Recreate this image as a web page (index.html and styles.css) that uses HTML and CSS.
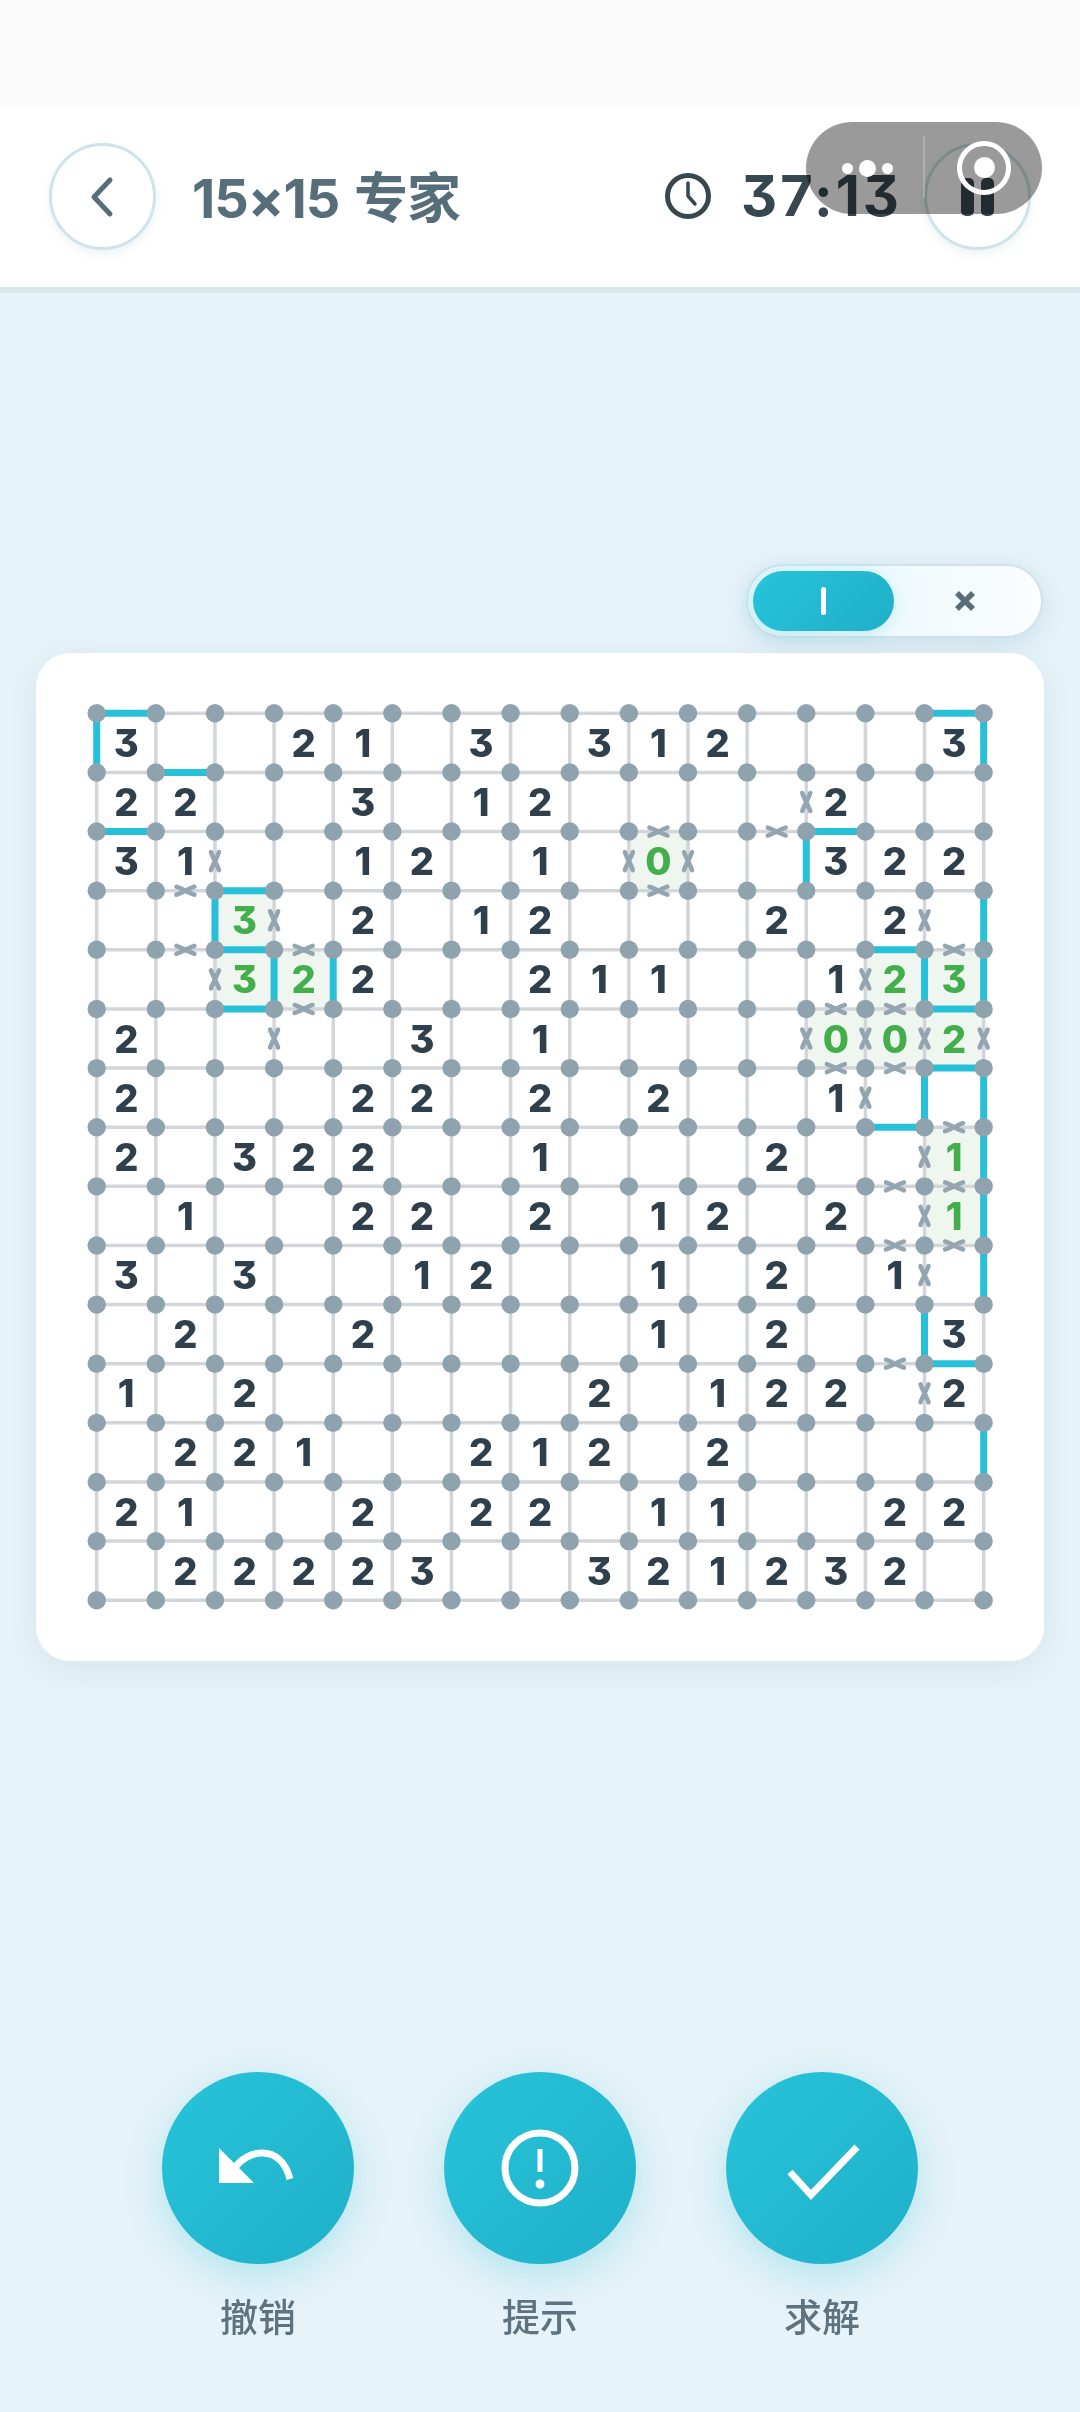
FILE: index.html
```html
<!DOCTYPE html>
<html lang="zh-CN">
<head>
    <meta charset="UTF-8">
    <meta name="viewport" content="width=device-width, initial-scale=1.0">
    <title>数回 - 15×15 专家</title>
    <link rel="stylesheet" href="styles.css">
</head>
<body>

    <div class="statusBar"></div>

    <div class="header">
        <button class="roundButton">
            <svg width="30" height="42" viewBox="0 0 30 42"><path class="chevron" d="M22 4 L6 21 L22 38"/></svg>
        </button>
        <div class="title">15×15 专家</div>
        <div class="timer">
            <svg class="clock" width="48" height="48" viewBox="0 0 48 48">
                <circle cx="24" cy="24" r="20.5"/>
                <path class="clockHand" d="M24 11 V24 L31 32"/>
            </svg>
            <span>37:13</span>
        </div>
        <button class="roundButton pauseButton">
            <span class="pauseBar"></span>
            <span class="pauseBar"></span>
        </button>
    </div>

    <!-- capsule drawn by the host app, sits over the header -->
    <div class="capsule">
        <div class="capsuleDots">
            <span class="dotSmall"></span>
            <span class="dotBig"></span>
            <span class="dotSmall"></span>
        </div>
        <div class="capsuleLine"></div>
        <div class="capsuleRecord"><span></span></div>
    </div>

    <div class="mainContent">
        <div class="modeToggle">
            <div class="modeItem modeActive"><span class="lineMark"></span></div>
            <div class="modeItem">
                <svg width="22" height="22" viewBox="0 0 22 22"><path class="crossMark" d="M3 3 L19 19 M19 3 L3 19"/></svg>
            </div>
        </div>

        <div class="boardCard">
            <svg id="board" class="board" viewBox="0 0 928 928" width="928" height="928"></svg>
        </div>

        <div class="actions">
            <div class="action">
                <div class="actionCircle">
                    <svg width="192" height="192" viewBox="0 0 192 192">
                        <path class="iconFill" d="M57 76 V111 H92 Z"/>
                        <path class="iconLine" d="M72 97 C84 78 118 70 128 107"/>
                    </svg>
                </div>
                <div class="actionLabel">撤销</div>
            </div>
            <div class="action">
                <div class="actionCircle">
                    <svg width="192" height="192" viewBox="0 0 192 192">
                        <circle class="iconLine" cx="96" cy="96" r="35"/>
                        <path class="iconLine thin" d="M96 77 V100"/>
                        <circle class="iconFill" cx="96" cy="112" r="4.5"/>
                    </svg>
                </div>
                <div class="actionLabel">提示</div>
            </div>
            <div class="action">
                <div class="actionCircle">
                    <svg width="192" height="192" viewBox="0 0 192 192">
                        <path class="iconLine" d="M64 100 L85 123 L131 75"/>
                    </svg>
                </div>
                <div class="actionLabel">求解</div>
            </div>
        </div>
    </div>

    <script>
        const SIZE = 15;
        const START_X = 20.7;
        const START_Y = 20.3;
        const STEP = 59.13;

        const numbers = [
            '3..21.3.312...3',
            '22..3.12....2..',
            '31..12.1.0..322',
            '..3.2.12...2.2.',
            '..322..211..123',
            '2....3.1....002',
            '2...22.2.2..1..',
            '2.322..1...2..1',
            '.1..22.2.12.2.1',
            '3.3..12..1.2.1.',
            '.2..2....1.2..3',
            '1.2.....2.122.2',
            '.221..212.2....',
            '21..2.22.11..22',
            '.22223..321232.'
        ];

        // cells whose clue is already satisfied [row, col]
        const doneCells = [[2,9],[3,2],[4,2],[4,3],[4,13],[4,14],[5,12],[5,13],[5,14],[7,14],[8,14]];

        // horizontal edges are [row line, col], vertical edges are [col line, row]
        const hLines = [[0,0],[1,1],[2,0],[0,14],[2,12],[3,2],[4,2],[5,2],[4,13],[5,14],[6,14],[7,13],[11,14]];
        const vLines = [[0,0],[15,0],[12,2],[2,3],[3,4],[4,4],[15,3],[15,4],[14,4],[14,6],[15,6],[15,7],[15,8],[15,9],[14,10],[15,12]];
        const hCrosses = [[3,1],[4,1],[4,3],[5,3],[2,9],[3,9],[2,11],[4,14],[5,12],[5,13],[6,12],[6,13],[7,14],[8,13],[8,14],[9,13],[9,14],[11,13]];
        const vCrosses = [[2,2],[3,3],[2,4],[3,5],[9,2],[10,2],[12,1],[14,3],[13,4],[12,5],[13,5],[14,5],[15,5],[13,6],[14,7],[14,8],[14,9],[14,11]];

        const px = i => START_X + i * STEP;
        const py = j => START_Y + j * STEP;

        function line(x1, y1, x2, y2, cls) {
            return `<line class="${cls}" x1="${x1}" y1="${y1}" x2="${x2}" y2="${y2}"/>`;
        }

        function cross(x, y, vertical) {
            const turn = vertical ? ' rotate(90)' : '';
            return `<path class="xMark" transform="translate(${x} ${y})${turn}" d="M-9 -4 C-3 -2 3 2 9 4 M-9 4 C-3 2 3 -2 9 -4"/>`;
        }

        function drawBoard() {
            let out = '';

            doneCells.forEach(([r, c]) => {
                out += `<rect class="doneCell" x="${px(c)}" y="${py(r)}" width="${STEP}" height="${STEP}"/>`;
            });

            for (let i = 0; i <= SIZE; i++) {
                out += line(px(0), py(i), px(SIZE), py(i), 'gridLine');
                out += line(px(i), py(0), px(i), py(SIZE), 'gridLine');
            }

            hLines.forEach(([j, i]) => { out += line(px(i), py(j), px(i + 1), py(j), 'loopLine'); });
            vLines.forEach(([i, j]) => { out += line(px(i), py(j), px(i), py(j + 1), 'loopLine'); });

            hCrosses.forEach(([j, i]) => { out += cross(px(i + 0.5), py(j), false); });
            vCrosses.forEach(([i, j]) => { out += cross(px(i), py(j + 0.5), true); });

            for (let j = 0; j <= SIZE; j++) {
                for (let i = 0; i <= SIZE; i++) {
                    out += `<circle class="gridDot" cx="${px(i)}" cy="${py(j)}" r="9.2"/>`;
                }
            }

            numbers.forEach((row, r) => {
                row.split('').forEach((ch, c) => {
                    if (ch === '.') return;
                    const done = doneCells.some(d => d[0] === r && d[1] === c);
                    const cls = done ? 'clue clueDone' : 'clue';
                    out += `<text class="${cls}" x="${px(c + 0.5)}" y="${py(r + 0.5) + 14}">${ch}</text>`;
                });
            });

            document.getElementById('board').innerHTML = out;
        }

        drawBoard();
    </script>

</body>
</html>
```

FILE: styles.css
```css
body {
    margin: 0;
    width: 1080px;
    height: 2412px;
    overflow: hidden;
    position: relative;
    font-family: Inter, "Noto Sans CJK SC", sans-serif;
    font-feature-settings: "cv09";
    background-color: #e6f3f8;
    color: #37474f;
}

.statusBar {
    height: 107px;
    background-color: #fafafa;
}

/* Barra do topo */
.header {
    height: 180px;
    padding: 0 49px;
    background-color: white;
    border-bottom: 6px solid #d6e8ea;
    display: flex;
    align-items: center;
}

.roundButton {
    width: 107px;
    height: 107px;
    padding: 0;
    margin-top: -1px;
    border: 3px solid #cfe3ea;
    border-radius: 50%;
    background-color: white;
    box-shadow: 0 4px 10px rgba(80, 130, 150, 0.1);
    display: flex;
    align-items: center;
    justify-content: center;
    flex-shrink: 0;
}

.chevron {
    fill: none;
    stroke: #566e7a;
    stroke-width: 5;
    stroke-linecap: round;
    stroke-linejoin: round;
}

.title {
    margin-left: 36px;
    margin-top: -6px;
    font-size: 54px;
    font-weight: 700;
    letter-spacing: -1px;
    word-spacing: 3px;
    color: #566e7a;
}

.timer {
    margin-left: auto;
    margin-right: 22px;
    margin-top: -3px;
    display: flex;
    align-items: center;
    gap: 29px;
    font-size: 56px;
    font-weight: 700;
    letter-spacing: 3px;
    color: #37474f;
}

.clock {
    fill: none;
    stroke: #37474f;
    stroke-width: 5;
    stroke-linecap: round;
    stroke-linejoin: round;
}

.clockHand {
    stroke-width: 3.5;
}

.pauseButton {
    gap: 7px;
}

.pauseBar {
    width: 13px;
    height: 38px;
    border-radius: 5px;
    background-color: #37474f;
}

/* Capsula */
.capsule {
    position: absolute;
    top: 122px;
    left: 806px;
    width: 236px;
    height: 92px;
    display: flex;
    align-items: center;
}

/* darkens what is under it, the text below stays readable */
.capsule::before {
    content: "";
    position: absolute;
    inset: 0;
    border-radius: 46px;
    background-color: #9a9a9a;
    mix-blend-mode: multiply;
}

.capsuleDots {
    position: relative;
    width: 117px;
    padding-left: 6px;
    box-sizing: border-box;
    display: flex;
    align-items: center;
    justify-content: center;
    gap: 6px;
}

.dotSmall {
    width: 11px;
    height: 11px;
    border-radius: 50%;
    background-color: white;
}

.dotBig {
    width: 17px;
    height: 17px;
    border-radius: 50%;
    background-color: white;
}

.capsuleLine {
    position: relative;
    width: 2px;
    height: 62px;
    margin-top: -2px;
    background-color: rgba(255, 255, 255, 0.22);
}

.capsuleRecord {
    position: relative;
    width: 54px;
    height: 54px;
    margin-left: 32px;
    margin-top: -1px;
    box-sizing: border-box;
    border: 5px solid white;
    border-radius: 50%;
    display: flex;
    align-items: center;
    justify-content: center;
}

.capsuleRecord span {
    width: 21px;
    height: 21px;
    border-radius: 50%;
    background-color: white;
}

/* Conteudo principal */
.mainContent {
    display: flex;
    flex-direction: column;
    padding-top: 271px;
}

.modeToggle {
    align-self: flex-end;
    margin-right: 37px;
    width: 297px;
    height: 74px;
    box-sizing: border-box;
    padding: 5px;
    border: 2px solid #cfe2eb;
    border-radius: 37px;
    background: linear-gradient(90deg, #e4f6fb, #fbfdfe);
    box-shadow: 0 6px 24px rgba(90, 150, 175, 0.2);
    display: flex;
    align-items: center;
}

.modeItem {
    flex: 1;
    height: 60px;
    display: flex;
    align-items: center;
    justify-content: center;
}

.modeActive {
    flex: 0 0 141px;
    border-radius: 30px;
    background: linear-gradient(135deg, #27c4da, #1fafc8);
    box-shadow: 0 3px 16px rgba(38, 192, 217, 0.22);
}

.lineMark {
    width: 5px;
    height: 28px;
    border-radius: 3px;
    background-color: white;
}

.crossMark {
    fill: none;
    stroke: #566e7a;
    stroke-width: 5.5;
}

.boardCard {
    margin: 15px 36px 0;
    padding: 40px;
    height: 928px;
    background-color: white;
    border-radius: 34px;
    box-shadow: 0 8px 30px rgba(90, 140, 165, 0.12);
}

.board {
    display: block;
}

.doneCell {
    fill: #eff6ef;
}

.gridLine {
    stroke: #d3d5d8;
    stroke-width: 3.5;
}

.loopLine {
    stroke: #26c0d9;
    stroke-width: 7;
}

.xMark {
    fill: none;
    stroke: #93a5b0;
    stroke-width: 4.5;
    stroke-linecap: round;
}

.gridDot {
    fill: #8fa3af;
}

.clue {
    font-size: 38px;
    font-weight: 800;
    fill: #2f3f4b;
    text-anchor: middle;
}

.clueDone {
    fill: #43ae4c;
}

/* Botoes de baixo */
.actions {
    margin-top: 411px;
    display: flex;
    justify-content: center;
    gap: 90px;
}

.action {
    width: 192px;
    display: flex;
    flex-direction: column;
    align-items: center;
}

.actionCircle {
    width: 192px;
    height: 192px;
    border-radius: 50%;
    background: linear-gradient(135deg, #27c4da, #1fb0c9);
    box-shadow: 0 12px 40px rgba(38, 192, 217, 0.28);
}

.actionCircle svg {
    display: block;
}

.iconFill {
    fill: white;
}

.iconLine {
    fill: none;
    stroke: white;
    stroke-width: 7;
}

.iconLine.thin {
    stroke-width: 5;
}

.actionLabel {
    margin-top: 29px;
    font-size: 38px;
    line-height: 48px;
    font-weight: 500;
    color: #5d7480;
}
```
